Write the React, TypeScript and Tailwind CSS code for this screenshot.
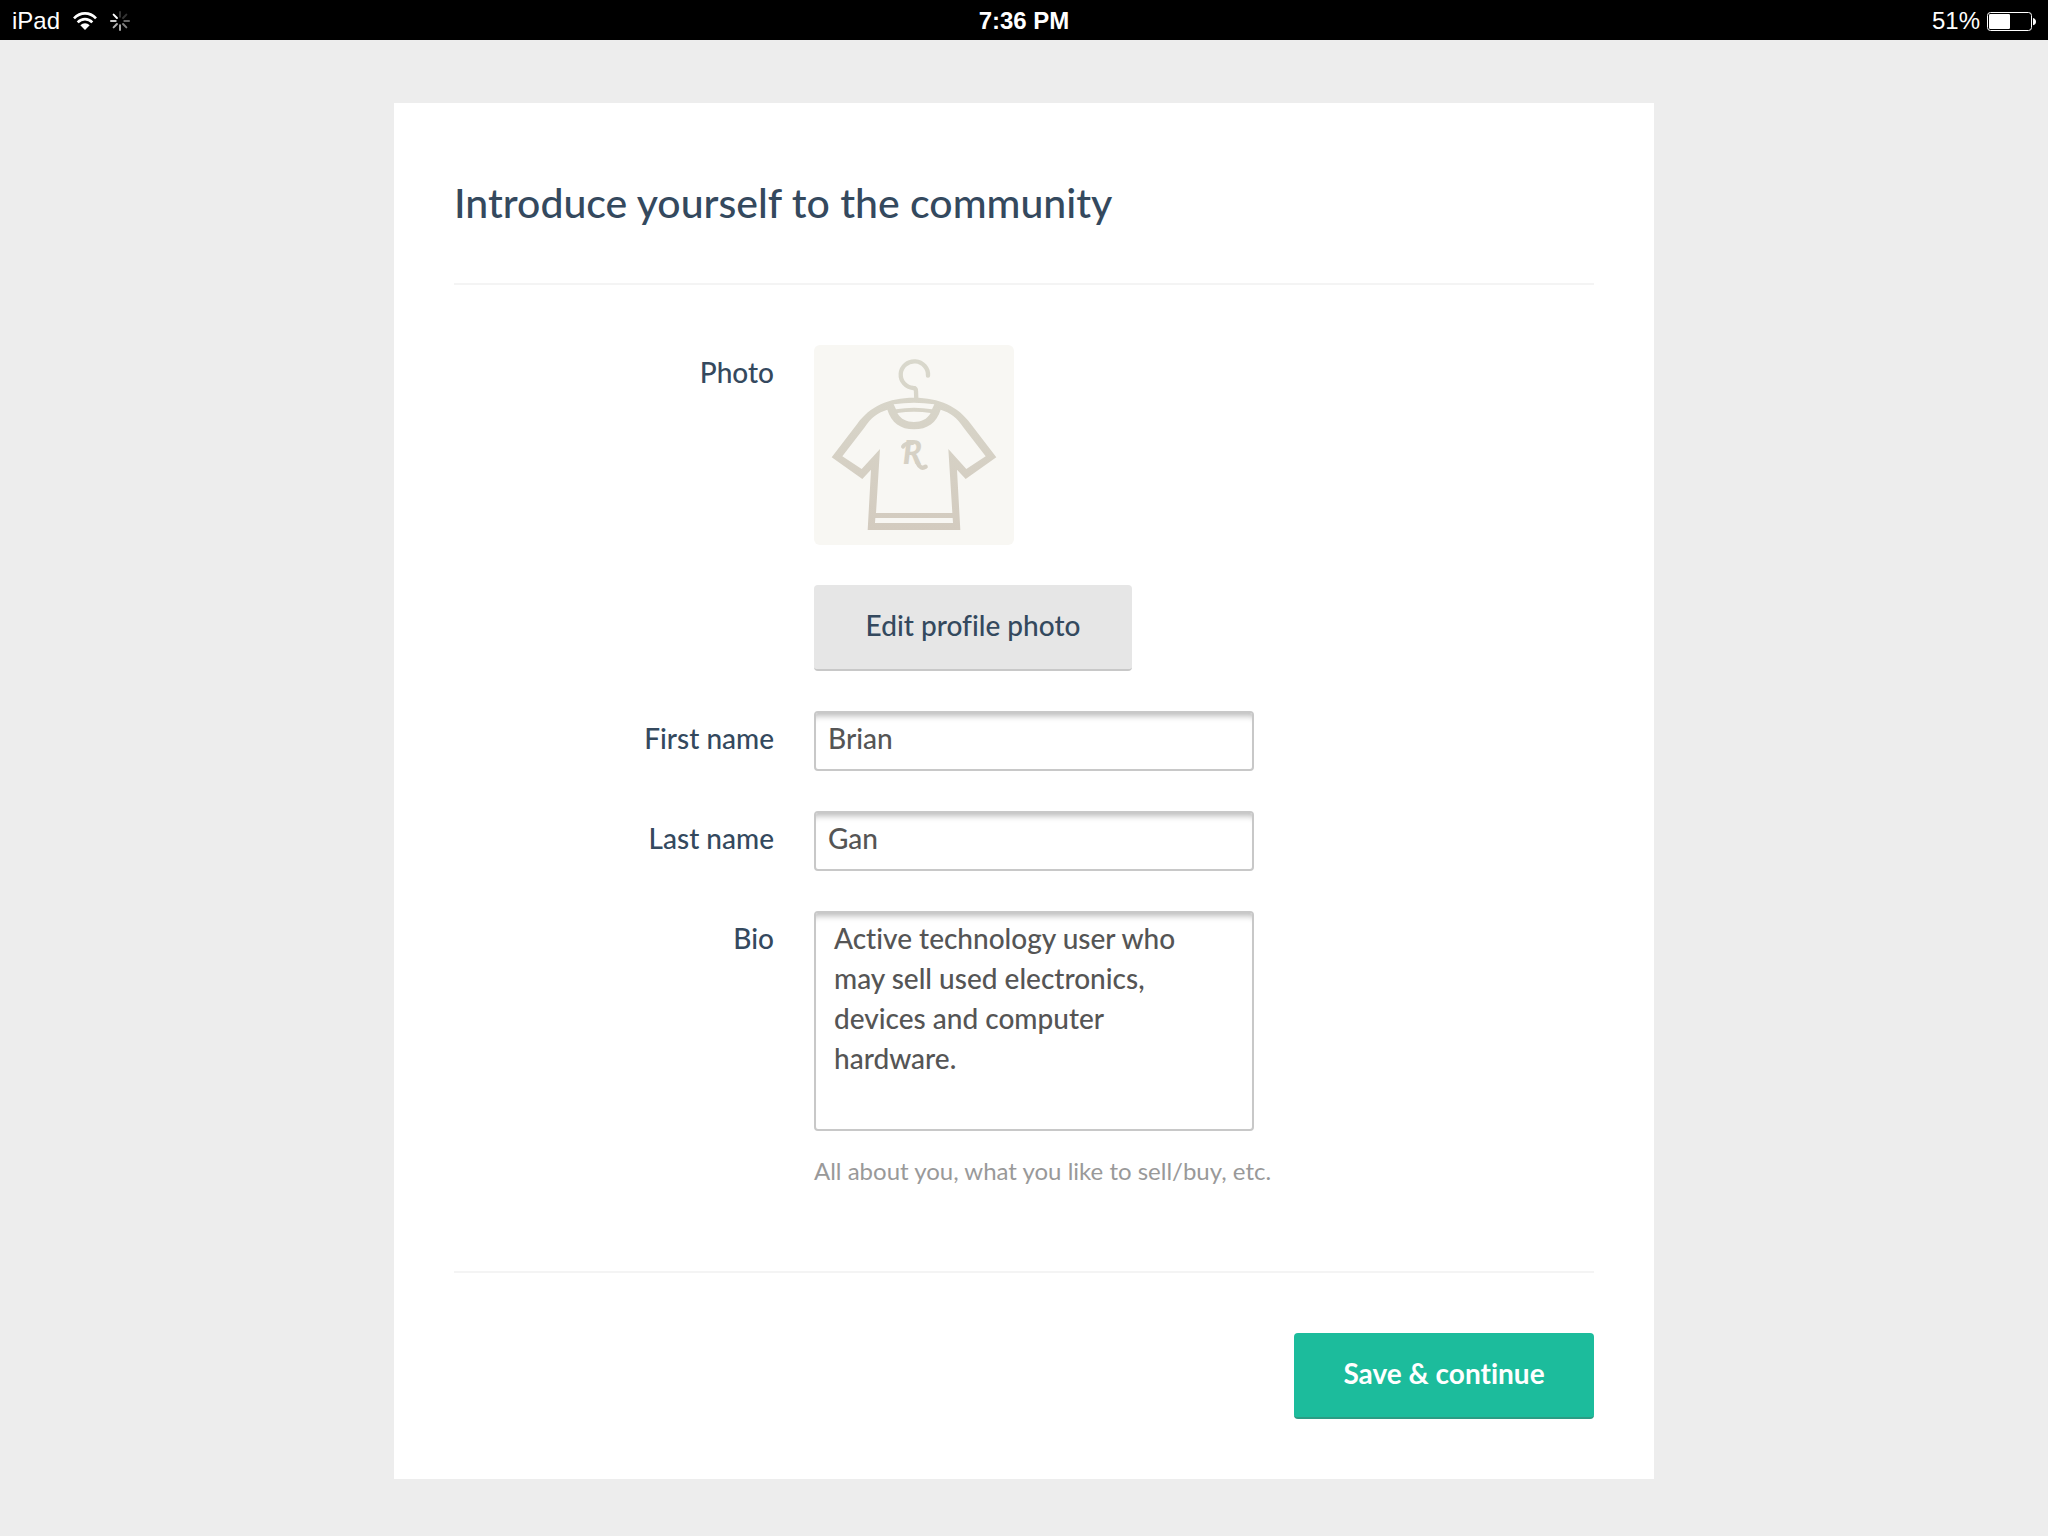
import type { ReactNode } from "react";

const inputStyle =
  "w-full rounded border-2 border-[#c8c8c8] bg-white text-[28px] leading-10 font-medium text-[#555] shadow-[inset_0_9px_6px_-6px_#bbb] outline-none";

function Wifi() {
  return (
    <svg viewBox="0 0 72 54" className="h-[18px] w-6" aria-hidden="true">
      <g fill="none" stroke="#fff" strokeWidth="8">
        <path d="M3 19 C22 -1 50 -1 69 19" />
        <path d="M14 31 C27 18 45 18 58 31" />
      </g>
      <path d="M22 40 C30 32 42 32 50 40 L36 54 Z" fill="#fff" />
    </svg>
  );
}

const spokes = [0.2, 0.2, 0.4, 0.5, 0.65, 0.7, 0.8, 1];

function Spinner() {
  return (
    <svg viewBox="-30 -30 60 60" className="size-5" aria-hidden="true">
      {spokes.map((opacity, i) => (
        <line
          key={i}
          x1="0"
          y1="-13"
          x2="0"
          y2="-27"
          stroke="#fff"
          strokeWidth="6"
          strokeLinecap="round"
          opacity={opacity}
          transform={`rotate(${i * 45})`}
        />
      ))}
    </svg>
  );
}

function Battery() {
  return (
    <svg viewBox="0 0 147 57" className="h-[19px] w-[49px]" aria-hidden="true">
      <rect x="1.5" y="1.5" width="132" height="54" rx="9" fill="none" stroke="#fff" strokeWidth="3" />
      <rect x="6" y="6" width="63" height="45" rx="4" fill="#fff" />
      <path d="M138 18 q9 3 9 11 t-9 11 Z" fill="#fff" />
    </svg>
  );
}

function Shirt() {
  return (
    <svg
      viewBox="402 45 600 600"
      className="size-[200px] rounded-md bg-[#f8f7f3]"
      role="img"
      aria-label="Profile photo"
    >
      <defs>
        <linearGradient id="cloth" gradientUnits="userSpaceOnUse" x1="0" y1="87" x2="0" y2="600">
          <stop offset="0" stopColor="#d9d8cc" />
          <stop offset="1" stopColor="#d3cbbf" />
        </linearGradient>
      </defs>
      <path
        d="M744 137 A41 40 0 1 0 700 174 Q708 174 708 184 L709 210"
        fill="none"
        stroke="url(#cloth)"
        strokeWidth="13"
        strokeLinecap="round"
      />
      <path
        fill="url(#cloth)"
        fillRule="evenodd"
        d="M455 382 L532 281 C570 229 625 203 702 203 C779 203 834 229 872 281 L949 382 L857 447 L831 419 L841 600 L563 600 L573 419 L547 447 Z
           M487 379 L545 417 L600 357 L588 549 L817 549 L805 357 L859 417 L917 379 L851 293 C831 263 810 247 782 239 C770 278 742 298 702 298 C662 298 634 278 622 239 C594 247 573 263 553 293 Z
           M586 564 L818 564 L819 579 L585 579 Z
           M641 223 Q702 213 763 223 L756 238 Q702 228 648 238 Z
           M652 249 Q702 242 752 249 C741 268 724 276 702 276 C680 276 663 268 652 249 Z"
      />
      <text
        x="668"
        y="403"
        fontFamily="Lato, sans-serif"
        fontSize="95"
        fontStyle="italic"
        fontWeight="900"
        fill="url(#cloth)"
      >
        R
      </text>
      <g fill="none" stroke="url(#cloth)" strokeLinecap="round">
        <path d="M669 350 Q674 339 698 339" strokeWidth="12" />
        <path d="M712 398 Q722 420 737 410" strokeWidth="13" />
      </g>
    </svg>
  );
}

function Row({ label, htmlFor, children }: { label: string; htmlFor: string; children: ReactNode }) {
  return (
    <div className="flex gap-10">
      <label htmlFor={htmlFor} className="w-80 shrink-0 pt-[7px] text-right leading-10">
        {label}
      </label>
      <div className="min-w-0 flex-1">{children}</div>
    </div>
  );
}

export default function App() {
  return (
    <div className="min-h-screen bg-[#ededed] pb-14 font-[Lato,sans-serif] text-[28px] font-medium text-[#34495e] [font-variant-ligatures:none]">
      <header className="grid h-10 grid-cols-3 items-center bg-black px-3 pt-0.5 font-['Liberation_Sans',sans-serif] text-2xl font-normal text-white">
        <div className="flex items-center gap-[13px]">
          <span>iPad</span>
          <Wifi />
          <Spinner />
        </div>
        <time className="text-center font-bold">7:36 PM</time>
        <div className="flex items-center justify-end gap-[7px]">
          <span>51%</span>
          <Battery />
        </div>
      </header>

      <main className="mx-auto mt-[63px] max-w-[1260px] bg-white p-[60px]">
        <form onSubmit={(e) => e.preventDefault()}>
          <h1 className="border-b-2 border-[#f4f4f4] pt-4 pb-14 text-[41px] leading-12 font-medium">
            Introduce yourself to the community
          </h1>

          <div className="flex flex-col gap-10 py-[60px]">
            <Row label="Photo" htmlFor="photo">
              <Shirt />
              <button
                id="photo"
                type="button"
                className="mt-10 block min-w-[318px] rounded border-b-2 border-[#c8c8c8] bg-[#e6e6e6] px-12 pt-5 pb-6 leading-10"
              >
                Edit profile photo
              </button>
            </Row>
            <Row label="First name" htmlFor="first">
              <input id="first" defaultValue="Brian" className={`${inputStyle} block h-[60px] max-w-[440px] px-3 pb-1.5`} />
            </Row>
            <Row label="Last name" htmlFor="last">
              <input id="last" defaultValue="Gan" className={`${inputStyle} block h-[60px] max-w-[440px] px-3 pb-1.5`} />
            </Row>
            <Row label="Bio" htmlFor="bio">
              <textarea
                id="bio"
                className={`${inputStyle} block h-[220px] max-w-[440px] resize-none pt-[5px] pr-10 pl-[18px]`}
                defaultValue="Active technology user who may sell used electronics, devices and computer hardware."
              />
              <p className="mt-5 pb-5 text-2xl leading-10 font-normal text-[#999]">
                All about you, what you like to sell/buy, etc.
              </p>
            </Row>
          </div>

          <div className="flex justify-end border-t-2 border-[#f4f4f4] pt-[60px]">
            <button
              type="submit"
              className="min-w-[300px] rounded border-b-2 border-[#2b9c84] bg-[#1cbc9c] px-12 pt-5 pb-6 leading-10 font-bold text-white"
            >
              Save &amp; continue
            </button>
          </div>
        </form>
      </main>
    </div>
  );
}
